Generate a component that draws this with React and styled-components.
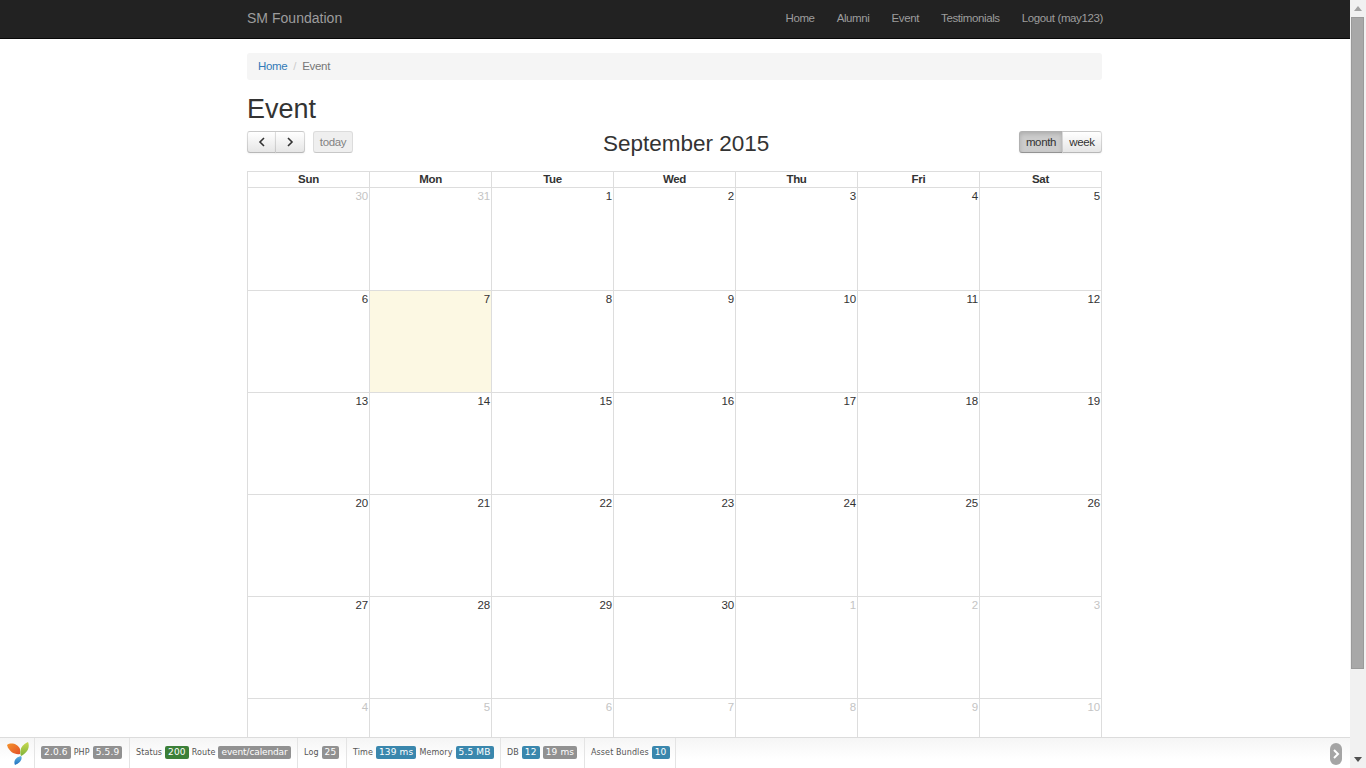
import React from 'react';
import styled, { createGlobalStyle } from 'styled-components';

const Global = createGlobalStyle`
  html, body { margin: 0; padding: 0; height: 100%; overflow: hidden; background: #fff; }
  body { font-family: "Liberation Sans", Arial, sans-serif; font-size: 12px; color: #333; }
  * { box-sizing: border-box; }
`;

const Shell = styled.div`display: flex; height: 768px; width: 1366px; overflow: hidden; position: relative;`;
const Page = styled.div`width: 1350px; flex: none; height: 768px; overflow: hidden;`;

const Navbar = styled.nav`height: 39px; background: #222; border-bottom: 1px solid #080808; padding-left: 247px;`;
const NavInner = styled.div`width: 855px; height: 36px; display: flex; align-items: center; justify-content: space-between;`;
const Brand = styled.a`font-size: 14px; letter-spacing: .02px; color: #9d9d9d;`;
const NavList = styled.div`display: flex; gap: 22px; margin-right: -1px;`;
const NavLink = styled.a`font-size: 11.5px; letter-spacing: -0.38px; color: #9d9d9d;`;

const Container = styled.div`width: 855px; margin-left: 247px;`;
const Breadcrumb = styled.div`margin-top: 14px; height: 27px; background: #f5f5f5; border-radius: 3px; padding: 0 11px 2px; display: flex; align-items: center; font-size: 11.5px; letter-spacing: -0.33px;`;
const Crumb = styled.a`color: #337ab7;`;
const Sep = styled.span`color: #ccc; padding: 0 6px;`;
const Current = styled.span`color: #777;`;
const Heading = styled.h1`margin: 13px 0 0; font-size: 27px; font-weight: 400; line-height: 33px; height: 33px; color: #333;`;

const Toolbar = styled.div`margin-top: 5px; height: 22px; display: flex; justify-content: space-between; align-items: flex-start; position: relative;`;
const Group = styled.div`display: flex;`;
const LeftTools = styled.div`display: flex; gap: 8px;`;
const Title = styled.h2`margin: 0; font-size: 22.5px; font-weight: 400; line-height: 26px; color: #333; position: absolute; left: 356px; top: 0;`;
const Btn = styled.button`
  height: 22px; padding: 0; margin-left: ${p => p.$join ? '-1px' : 0};
  font: 11.5px "Liberation Sans", Arial, sans-serif; letter-spacing: -0.35px; color: #333;
  border: 1px solid rgba(0,0,0,.13); border-bottom-color: rgba(0,0,0,.28);
  border-radius: ${p => p.$radius};
  background: linear-gradient(#fff, #e6e6e6);
  box-shadow: inset 0 1px 0 rgba(255,255,255,.2), 0 1px 2px rgba(0,0,0,.05);
  display: flex; align-items: center; justify-content: center;
  width: ${p => p.$w}px;
  ${p => p.$disabled && 'opacity: .62; background: #e6e6e6; box-shadow: none;'}
  ${p => p.$active && 'background: #ccc; box-shadow: inset 0 2px 4px rgba(0,0,0,.15), 0 1px 2px rgba(0,0,0,.05);'}
`;

const Grid = styled.div`margin-top: 18px; display: grid; grid-template-columns: repeat(7, 122px); width: 855px; border-left: 1px solid #ddd; border-top: 1px solid #ddd;`;
const Head = styled.div`height: 16px; border-right: 1px solid #ddd; border-bottom: 1px solid #ddd; font-weight: 700; font-size: 11.5px; letter-spacing: -0.3px; line-height: 15px; text-align: center; color: #333;`;
const Cell = styled.div`
  height: ${p => p.$first ? 103 : 102}px; border-right: 1px solid #ddd; border-bottom: 1px solid #ddd;
  padding: 1px 1px 0 0; text-align: right; font-size: 11.5px; letter-spacing: -0.2px; line-height: 14px;
  color: ${p => p.$muted ? '#c4c4c4' : '#333'};
  background: ${p => p.$today ? '#fcf8e3' : 'transparent'};
`;

const Debug = styled.div`
  position: absolute; left: 0; bottom: 0; width: 1350px; height: 31px;
  border-top: 1px solid #dcdcdc; background: linear-gradient(#f5f5f5, #fff 70%);
  display: flex; font-family: "DejaVu Sans", Verdana, sans-serif; font-size: 8px; letter-spacing: .1px; color: #555;
`;
const DebugBlock = styled.div`
  width: ${p => p.$w}px; height: 30px; border-right: 1px solid #e4e4e4; flex: none;
  display: flex; align-items: center; gap: 3px; padding: 0 0 1px ${p => p.$pad}px; white-space: nowrap;
`;
const LogoBlock = styled(DebugBlock)`padding: 0 0 0 7px;`;
const Label = styled.span`
  display: inline-block; height: 13px; line-height: 13px; padding: 0 3px; border-radius: 2px;
  font-size: 9px; letter-spacing: ${p => p.$tight ? '-.12px' : '.15px'}; color: #fff; font-weight: 400;
  background: ${p => ({ green: '#3c8039', blue: '#3a87ad', grey: '#919191' }[p.$c])};
`;
const Toggle = styled.div`
  position: absolute; right: 8px; bottom: 3px; width: 12px; height: 22px; border-radius: 6px; background: #a5a5a5;
  display: flex; align-items: center; justify-content: center;
`;

const Scrollbar = styled.div`width: 16px; flex: none; height: 768px; background: #f1f1f1; position: relative; display: flex; flex-direction: column; align-items: center;`;
const Arrow = styled.div`height: 17px; flex: none; width: 100%; display: flex; align-items: center; justify-content: center;`;
const Track = styled.div`flex: 1; width: 100%; padding: 0 2px 0 1px;`;
const Thumb = styled.div`height: 652px; background: #a8a8a8; border: 1px solid #9a9a9a;`;

const Logo = () => (
  <svg width="22" height="23" viewBox="0 0 22 23">
    <defs>
      <linearGradient id="o" x1="0" y1="0" x2="1" y2="1"><stop offset="0" stopColor="#f5932b"/><stop offset="1" stopColor="#e2522a"/></linearGradient>
      <linearGradient id="g" x1="0" y1="0" x2="0" y2="1"><stop offset="0" stopColor="#c9d94f"/><stop offset="1" stopColor="#7fb23a"/></linearGradient>
      <linearGradient id="b" x1="0" y1="0" x2="0" y2="1"><stop offset="0" stopColor="#5fb4e0"/><stop offset="1" stopColor="#1f6fc0"/></linearGradient>
    </defs>
    <path d="M0 3C4 0 11 2 13 7L13 12C8 13 2 10 0 3Z" fill="url(#o)"/>
    <path d="M21 0C23 5 21 10 14 14C12 9 14 3 21 0Z" fill="url(#g)"/>
    <path d="M14 14C16 17 13 21 8 23C6 19 9 15 14 14Z" fill="url(#b)"/>
  </svg>
);

const Chevron = ({ left }) => (
  <svg width="8" height="10" viewBox="0 0 8 10">
    <polyline points={left ? '6,1 2,5 6,9' : '2,1 6,5 2,9'} fill="none" stroke="#333" strokeWidth="1.6"/>
  </svg>
);

const days = ['Sun', 'Mon', 'Tue', 'Wed', 'Thu', 'Fri', 'Sat'];
const weeks = [
  [[30,1],[31,1],[1],[2],[3],[4],[5]],
  [[6],[7,0,1],[8],[9],[10],[11],[12]],
  [[13],[14],[15],[16],[17],[18],[19]],
  [[20],[21],[22],[23],[24],[25],[26]],
  [[27],[28],[29],[30],[1,1],[2,1],[3,1]],
  [[4,1],[5,1],[6,1],[7,1],[8,1],[9,1],[10,1]],
];

export default function App() {
  return (
    <Shell>
      <Global />
      <Page>
        <Navbar>
          <NavInner>
            <Brand>SM Foundation</Brand>
            <NavList>
              {['Home', 'Alumni', 'Event', 'Testimonials', 'Logout (may123)'].map(t => <NavLink key={t}>{t}</NavLink>)}
            </NavList>
          </NavInner>
        </Navbar>
        <Container>
          <Breadcrumb><Crumb>Home</Crumb><Sep>/</Sep><Current>Event</Current></Breadcrumb>
          <Heading>Event</Heading>
          <Toolbar>
            <LeftTools>
              <Group>
                <Btn $w={29} $radius="3px 0 0 3px"><Chevron left /></Btn>
                <Btn $w={30} $join $radius="0 3px 3px 0"><Chevron /></Btn>
              </Group>
              <Btn $w={40} $disabled $radius="3px">today</Btn>
            </LeftTools>
            <Title>September 2015</Title>
            <Group>
              <Btn $w={44} $active $radius="3px 0 0 3px">month</Btn>
              <Btn $w={40} $join $radius="0 3px 3px 0">week</Btn>
            </Group>
          </Toolbar>
          <Grid>
            {days.map(d => <Head key={d}>{d}</Head>)}
            {weeks.map((w, i) => w.map(([n, muted, today]) => (
              <Cell key={`${i}-${n}`} $first={i === 0} $muted={!!muted} $today={!!today}>{n}</Cell>
            )))}
          </Grid>
        </Container>
      </Page>
      <Debug>
        <LogoBlock $w={35}><Logo /></LogoBlock>
        <DebugBlock $w={95} $pad={6}><Label $c="grey">2.0.6</Label>PHP<Label $c="grey">5.5.9</Label></DebugBlock>
        <DebugBlock $w={168} $pad={6}>Status<Label $c="green">200</Label>Route<Label $c="grey" $tight>event/calendar</Label></DebugBlock>
        <DebugBlock $w={49} $pad={6}>Log<Label $c="grey">25</Label></DebugBlock>
        <DebugBlock $w={154} $pad={6}>Time<Label $c="blue">139 ms</Label>Memory<Label $c="blue">5.5 MB</Label></DebugBlock>
        <DebugBlock $w={84} $pad={6}>DB<Label $c="blue">12</Label><Label $c="grey">19 ms</Label></DebugBlock>
        <DebugBlock $w={91} $pad={6}>Asset Bundles<Label $c="blue">10</Label></DebugBlock>
        <Toggle>
          <svg width="8" height="10" viewBox="0 0 8 10"><polyline points="2,1 6,5 2,9" fill="none" stroke="#fff" strokeWidth="2"/></svg>
        </Toggle>
      </Debug>
      <Scrollbar>
        <Arrow><svg width="8" height="5" viewBox="0 0 8 5"><path d="M4 0L8 5H0Z" fill="#a3a3a3"/></svg></Arrow>
        <Track><Thumb /></Track>
        <Arrow><svg width="8" height="5" viewBox="0 0 8 5"><path d="M0 0H8L4 5Z" fill="#505050"/></svg></Arrow>
      </Scrollbar>
    </Shell>
  );
}
